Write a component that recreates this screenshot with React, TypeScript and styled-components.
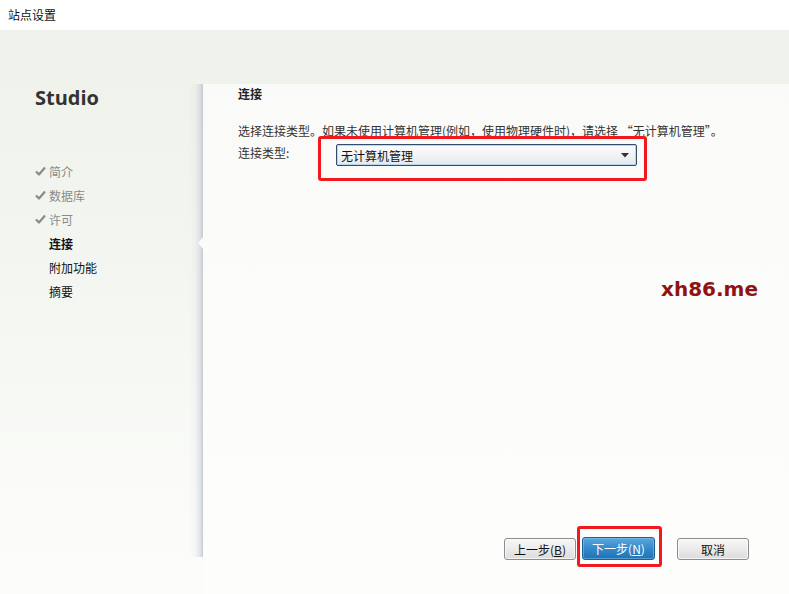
import React from "react";
import styled, { createGlobalStyle } from "styled-components";

const Global = createGlobalStyle`
  html, body { margin: 0; padding: 0; background: #ffffff; }
  body { font-family: "Noto Sans CJK SC", "Noto Sans", sans-serif; font-size: 12px; color: #222; }
  * { box-sizing: border-box; }
`;

const Window = styled.div`
  width: 789px;
  height: 594px;
  display: flex;
  flex-direction: column;
  overflow: hidden;
  position: relative;
`;

const TitleBar = styled.div`
  height: 30px;
  flex: none;
  display: flex;
  align-items: center;
  padding: 0 0 1px 8px;
  background: #ffffff;
  font-size: 12px;
  color: #111;
`;

const Body = styled.div`
  flex: 1;
  display: flex;
  background: linear-gradient(to bottom, #eef2ea 0%, #f3f6f0 40%, #fafbf8 80%, #fcfdfb 100%);
`;

const Sidebar = styled.div`
  width: 203px;
  flex: none;
  padding: 56px 0 0 35px;
  display: flex;
  flex-direction: column;
`;

const Brand = styled.div`
  font-family: "Open Sans", "Noto Sans", sans-serif;
  font-weight: 700;
  font-size: 20px;
  line-height: 24px;
  color: #333;
  margin-bottom: 49px;
`;

const NavList = styled.div`
  display: flex;
  flex-direction: column;
`;

const NavItem = styled.div<{ $state: "done" | "current" | "todo" }>`
  height: 24px;
  display: flex;
  align-items: center;
  font-size: 12px;
  color: ${(p) => (p.$state === "done" ? "#8a8a8a" : "#111")};
  font-weight: ${(p) => (p.$state === "current" ? 700 : 400)};
`;

const CheckSlot = styled.span`
  width: 14px;
  display: inline-flex;
  align-items: center;
`;

const Main = styled.div`
  flex: 1;
  margin-top: 54px;
  position: relative;
  display: flex;
  flex-direction: column;
  background: linear-gradient(to bottom, #fafbf9 0%, #fcfdfb 60%, #fdfdfc 100%);

  &::before {
    content: "";
    position: absolute;
    left: -14px;
    top: 0;
    bottom: 37px;
    width: 14px;
    background: linear-gradient(
      to right,
      rgba(200, 205, 215, 0) 0%,
      rgba(195, 200, 212, 0.12) 45%,
      rgba(185, 190, 204, 0.4) 80%,
      rgba(175, 181, 196, 0.7) 100%
    );
    pointer-events: none;
  }
`;

const Notch = styled.div`
  position: absolute;
  left: -5px;
  top: 153px;
  width: 0;
  height: 0;
  border-top: 6px solid transparent;
  border-bottom: 6px solid transparent;
  border-right: 5px solid #fafbf9;
`;

const Content = styled.div`
  flex: 1;
  padding: 2px 40px 0 35px;
  display: flex;
  flex-direction: column;
`;

const Heading = styled.div`
  font-weight: 700;
  font-size: 12px;
  line-height: 16px;
  color: #222;
  margin-bottom: 21px;
`;

const Description = styled.div`
  font-size: 12px;
  line-height: 16px;
  color: #333;
  margin-bottom: 6px;
  white-space: nowrap;
`;

const FieldRow = styled.div`
  display: flex;
  align-items: flex-start;
`;

const FieldLabel = styled.div`
  width: 98px;
  font-size: 12px;
  line-height: 16px;
  color: #333;
`;

const Highlight = styled.div<{ $l: number; $r: number; $t: number; $b: number }>`
  position: absolute;
  left: -${(p) => p.$l}px;
  right: -${(p) => p.$r}px;
  top: -${(p) => p.$t}px;
  bottom: -${(p) => p.$b}px;
  border: 3px solid #f2191e;
  border-radius: 3px;
  pointer-events: none;
`;

const ComboWrap = styled.div`
  position: relative;
  margin-top: -1px;
`;

const Combo = styled.div`
  width: 301px;
  height: 22px;
  border: 1px solid #2e4d6f;
  border-radius: 2px;
  background: linear-gradient(to bottom, #fdfdfd 0%, #f1f3f5 50%, #e4e8ec 100%);
  box-shadow: inset 0 0 0 1px #b9d6ee;
  display: flex;
  align-items: center;
  justify-content: space-between;
  padding: 0 7px 0 4px;
  font-size: 12px;
  color: #111;
`;

const Footer = styled.div`
  height: 56px;
  flex: none;
  display: flex;
  align-items: flex-start;
  justify-content: flex-end;
  padding: 0 40px 0 0;
`;

const ButtonWrap = styled.div<{ $gap: number }>`
  position: relative;
  margin-left: ${(p) => p.$gap}px;
`;

const Button = styled.div<{ $primary?: boolean }>`
  width: ${(p) => (p.$primary ? 73 : 72)}px;
  height: ${(p) => (p.$primary ? 23 : 22)}px;
  margin-top: ${(p) => (p.$primary ? -1 : 0)}px;
  border-radius: 3px;
  display: flex;
  align-items: center;
  justify-content: center;
  font-size: 12px;
  border: 1px solid ${(p) => (p.$primary ? "#1f5d92" : "#8c8c8c")};
  color: ${(p) => (p.$primary ? "#ffffff" : "#111")};
  background: ${(p) =>
    p.$primary
      ? "linear-gradient(to bottom, #5aa7dd 0%, #3489c9 50%, #1f72b4 100%)"
      : "linear-gradient(to bottom, #f7f7f7 0%, #ebebeb 50%, #dcdcdc 100%)"};
  box-shadow: ${(p) => (p.$primary ? "inset 0 0 0 1px rgba(140,200,240,0.5)" : "inset 0 0 0 1px rgba(255,255,255,0.7)")};
`;

const Underline = styled.span`
  text-decoration: underline;
`;

const Watermark = styled.div`
  position: absolute;
  left: 661px;
  top: 277px;
  font-family: "DejaVu Sans", "Noto Sans", sans-serif;
  font-size: 20px;
  font-weight: 700;
  letter-spacing: 0;
  color: #8e1414;
`;

const Check = () => (
  <svg width="11" height="10" viewBox="0 0 11 10">
    <path d="M1 5.5 L4 8.5 L10 1.5" fill="none" stroke="#8a8a8a" strokeWidth="2.2" strokeLinejoin="round" />
  </svg>
);

const Arrow = () => (
  <svg width="8" height="5" viewBox="0 0 8 5">
    <path d="M0 0 L8 0 L4 4.5 Z" fill="#333" />
  </svg>
);

const steps: { label: string; state: "done" | "current" | "todo" }[] = [
  { label: "简介", state: "done" },
  { label: "数据库", state: "done" },
  { label: "许可", state: "done" },
  { label: "连接", state: "current" },
  { label: "附加功能", state: "todo" },
  { label: "摘要", state: "todo" },
];

export default function App() {
  return (
    <Window>
      <Global />
      <TitleBar>站点设置</TitleBar>
      <Body>
        <Sidebar>
          <Brand>Studio</Brand>
          <NavList>
            {steps.map((s) => (
              <NavItem key={s.label} $state={s.state}>
                <CheckSlot>{s.state === "done" ? <Check /> : null}</CheckSlot>
                {s.label}
              </NavItem>
            ))}
          </NavList>
        </Sidebar>
        <Main>
          <Notch />
          <Content>
            <Heading>连接</Heading>
            <Description>选择连接类型。如果未使用计算机管理(例如，使用物理硬件时)，请选择 “无计算机管理”。</Description>
            <FieldRow>
              <FieldLabel>连接类型:</FieldLabel>
              <ComboWrap>
                <Combo>
                  <span>无计算机管理</span>
                  <Arrow />
                </Combo>
                <Highlight $l={18} $r={10} $t={8} $b={15} />
              </ComboWrap>
            </FieldRow>
          </Content>
          <Footer>
            <ButtonWrap $gap={0}>
              <Button>
                上一步(<Underline>B</Underline>)
              </Button>
            </ButtonWrap>
            <ButtonWrap $gap={6}>
              <Button $primary>
                下一步(<Underline>N</Underline>)
              </Button>
              <Highlight $l={5} $r={7} $t={12} $b={7} />
            </ButtonWrap>
            <ButtonWrap $gap={22}>
              <Button>取消</Button>
            </ButtonWrap>
          </Footer>
        </Main>
      </Body>
      <Watermark>xh86.me</Watermark>
    </Window>
  );
}
